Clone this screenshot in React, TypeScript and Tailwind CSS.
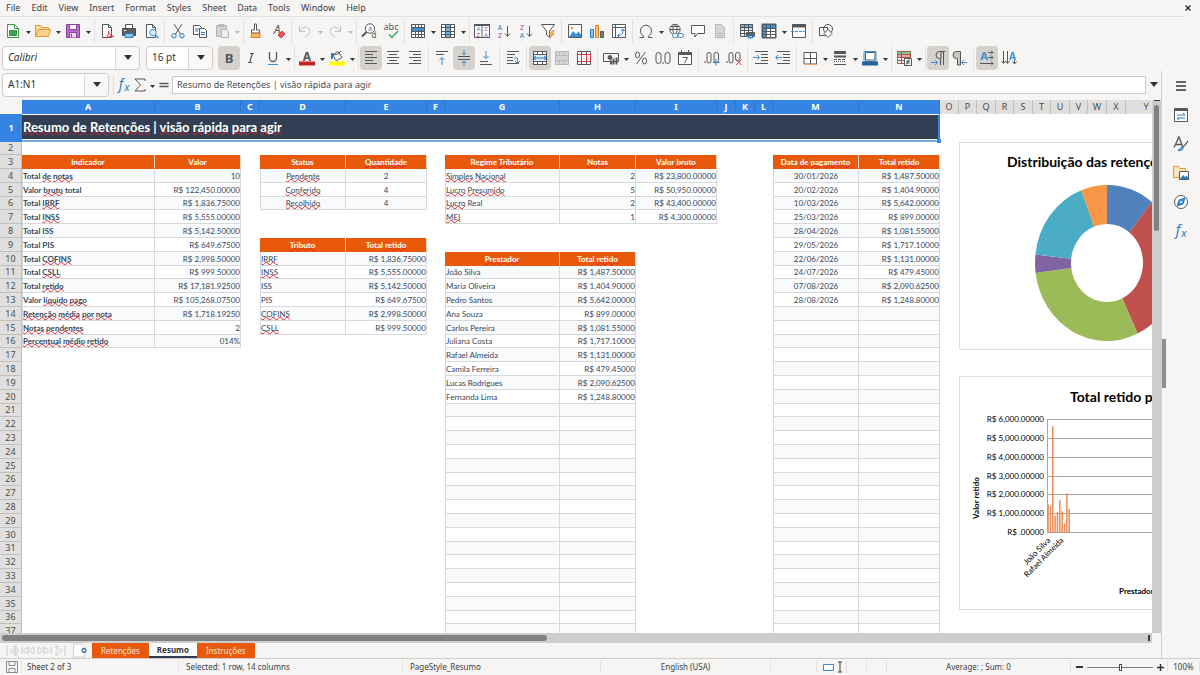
import React, { useState } from 'react';
import clsx from 'clsx';

type Align = 'left' | 'center' | 'right';

interface Block {
  col: number;
  row: number;
  headers: string[];
  aligns: Align[];
  rows: string[][];
  bold?: boolean;
  fillTo?: number;
}

const MENUS = ['File', 'Edit', 'View', 'Insert', 'Format', 'Styles', 'Sheet', 'Data', 'Tools', 'Window', 'Help'];
const COLS = 'ABCDEFGHIJKLMNOPQRSTUVWXY'.split('');
const COL_WIDTHS = [133, 86, 19, 86, 81, 18, 115, 76, 81, 19, 19, 18, 86, 81, 19, 18, 19, 18, 19, 18, 19, 18, 19, 19, 41];
const LAST_ROW = 37;
const SELECTED_COLS = 14;

// words between underscores are flagged by the spell checker
const TITLE = '_Resumo_ _de_ _Retenções_ | _visão_ _rápida_ _para_ _agir_';

const BLOCKS: Block[] = [
  {
    col: 0, row: 3, headers: ['_Indicador_', 'Valor'], aligns: ['left', 'right'], bold: true,
    rows: [
      ['Total _de_ _notas_', '10'],
      ['Valor _bruto_ total', 'R$ 122,450.00000'],
      ['Total _IRRF_', 'R$ 1,836.75000'],
      ['Total _INSS_', 'R$ 5,555.00000'],
      ['Total ISS', 'R$ 5,142.50000'],
      ['Total PIS', 'R$ 649.67500'],
      ['Total _COFINS_', 'R$ 2,998.50000'],
      ['Total _CSLL_', 'R$ 999.50000'],
      ['Total _retido_', 'R$ 17,181.92500'],
      ['Valor _líquido_ _pago_', 'R$ 105,268.07500'],
      ['_Retenção_ _média_ _por_ _nota_', 'R$ 1,718.19250'],
      ['_Notas_ _pendentes_', '2'],
      ['_Percentual_ _médio_ _retido_', '014%'],
    ],
  },
  {
    col: 3, row: 3, headers: ['Status', '_Quantidade_'], aligns: ['center', 'center'],
    rows: [['_Pendente_', '2'], ['_Conferido_', '4'], ['_Recolhido_', '4']],
  },
  {
    col: 3, row: 9, headers: ['_Tributo_', 'Total _retido_'], aligns: ['left', 'right'],
    rows: [
      ['_IRRF_', 'R$ 1,836.75000'],
      ['_INSS_', 'R$ 5,555.00000'],
      ['ISS', 'R$ 5,142.50000'],
      ['PIS', 'R$ 649.67500'],
      ['_COFINS_', 'R$ 2,998.50000'],
      ['_CSLL_', 'R$ 999.50000'],
    ],
  },
  {
    col: 6, row: 3, headers: ['Regime _Tributário_', '_Notas_', 'Valor _bruto_'], aligns: ['left', 'right', 'right'],
    rows: [
      ['_Simples_ _Nacional_', '2', 'R$ 23,800.00000'],
      ['_Lucro_ _Presumido_', '5', 'R$ 50,950.00000'],
      ['_Lucro_ Real', '2', 'R$ 43,400.00000'],
      ['_MEI_', '1', 'R$ 4,300.00000'],
    ],
  },
  {
    col: 6, row: 10, headers: ['_Prestador_', 'Total _retido_'], aligns: ['left', 'right'], fillTo: LAST_ROW,
    rows: [
      ['João Silva', 'R$ 1,487.50000'],
      ['Maria Oliveira', 'R$ 1,404.90000'],
      ['Pedro Santos', 'R$ 5,642.00000'],
      ['Ana Souza', 'R$ 899.00000'],
      ['Carlos Pereira', 'R$ 1,081.55000'],
      ['Juliana Costa', 'R$ 1,717.10000'],
      ['Rafael Almeida', 'R$ 1,131.00000'],
      ['Camila Ferreira', 'R$ 479.45000'],
      ['Lucas Rodrigues', 'R$ 2,090.62500'],
      ['Fernanda Lima', 'R$ 1,248.80000'],
    ],
  },
  {
    col: 12, row: 3, headers: ['Data _de_ _pagamento_', 'Total _retido_'], aligns: ['center', 'right'], fillTo: LAST_ROW,
    rows: [
      ['30/01/2026', 'R$ 1,487.50000'],
      ['20/02/2026', 'R$ 1,404.90000'],
      ['10/03/2026', 'R$ 5,642.00000'],
      ['25/03/2026', 'R$ 899.00000'],
      ['28/04/2026', 'R$ 1,081.55000'],
      ['29/05/2026', 'R$ 1,717.10000'],
      ['22/06/2026', 'R$ 1,131.00000'],
      ['24/07/2026', 'R$ 479.45000'],
      ['07/08/2026', 'R$ 2,090.62500'],
      ['28/08/2026', 'R$ 1,248.80000'],
    ],
  },
];

const ALIGN_CLASS: Record<Align, string> = {
  left: 'text-left',
  center: 'text-center',
  right: 'text-right',
};

const Spelled: React.FC<{ text: string }> = ({ text }) => (
  <>
    {text.split(/(_[^_]+_)/).map((part, i) =>
      part.startsWith('_') ? (
        <span key={i} className="underline decoration-wavy decoration-[#e0202a] decoration-1 underline-offset-[-1px] [text-decoration-skip-ink:none]">
          {part.slice(1, -1)}
        </span>
      ) : (
        <React.Fragment key={i}>{part}</React.Fragment>
      )
    )}
  </>
);

/* ---------- icons ---------- */

const Svg: React.FC<{ children: React.ReactNode }> = ({ children }) => (
  <svg width="16" height="16" viewBox="0 0 16 16" fill="none" stroke="#55585a" strokeWidth="1" aria-hidden="true" className="shrink-0 overflow-visible">
    {children}
  </svg>
);

const GlyphText: React.FC<{ x: number; y: number; size: number; fill?: string; bold?: boolean; italic?: boolean; anchor?: 'start' | 'middle'; children: string }> = ({
  x, y, size, fill = '#55585a', bold, italic, anchor = 'middle', children,
}) => (
  <text x={x} y={y} fontSize={size} fill={fill} stroke="none" textAnchor={anchor} fontFamily="'Noto Sans', sans-serif" fontWeight={bold ? 700 : 400} fontStyle={italic ? 'italic' : 'normal'}>
    {children}
  </text>
);

const pageShape = 'M3.5 1.5h6l3 3v10h-9z';

const ICONS: Record<string, React.ReactNode> = {
  new: <><path d="M2.5 1.5h7l4 4v9h-11z" stroke="#3a9a4c" fill="#fff" /><path d="M9.5 1.5v4h4" stroke="#3a9a4c" /><path d="M4.5 7.5h7v5h-7zM4.5 9h7M4.5 11h7M8 7v6" fill="#69c07a" stroke="#2f9043" /></>,
  open: <><path d="M.5 13.5v-11h5l1.500 2h6.500v9z" fill="#f9dc9a" stroke="#e8963a" /><path d="M.5 13.500l3-7h12l-2 7z" fill="#fbd48e" stroke="#e8963a" /></>,
  save: <><path d="M1.500 1.500h13v13h-13z" fill="#b66cc4" stroke="#8e3fa0" /><path d="M4.500 1.500h7v5h-7z" fill="#fff" stroke="#8e3fa0" /><path d="M4.500 14.500v-5h7v5" fill="#ecd7f0" stroke="#8e3fa0" /><path d="M6.500 11v3" stroke="#8e3fa0" /></>,
  pdf: <><path d={pageShape} fill="#fff" /><path d="M9.500 1.500v3h3" /><path d="M7 15c2-2 3-5 2.500-7 0 3 2 5 5.500 5.500-3-.5-6 .5-8 1.500z" stroke="#d9363e" /></>,
  print: <><path d="M4.500 5.500v-4h7v4" fill="#fff" /><path d="M1.500 5.500h13v7h-13z" fill="#5c6063" stroke="#4b4e50" /><path d="M3 7.500h2" stroke="#fff" /><path d="M4 10.500h8v4h-8z" fill="#8fc3ee" stroke="#2b7cc4" /></>,
  preview: <><path d={pageShape} fill="#fff" /><path d="M9.500 1.500v3h3" /><circle cx="10" cy="9.500" r="3.300" fill="#d7ebfa" stroke="#3c8fd1" /><path d="M12.300 12l3 3" stroke="#3c8fd1" strokeWidth="1.400" /></>,
  cut: <><path d="M4 1l6.500 10M12 1L5.500 11" /><circle cx="4" cy="12.700" r="2.200" stroke="#2b7cc4" /><circle cx="12" cy="12.700" r="2.200" stroke="#2b7cc4" /></>,
  copy: <><path d="M1.500 2.500h6l2 2v7h-8z" fill="#fff" /><path d="M3 6h5M3 8h3" stroke="#2b7cc4" /><path d="M7.500 5.500h5l2 2v7h-7z" fill="#fff" /><path d="M9 9.500h4M9 11.500h4" stroke="#2b7cc4" /></>,
  paste: <><path d="M2.500 2.500h10v11h-10z" fill="#d5d3d1" stroke="#b5b3b1" /><path d="M5 1.500h5v2h-5z" fill="#c4c2c0" stroke="#b5b3b1" /><path d="M7.500 6.500h5l2 2v6h-7z" fill="#f0efee" stroke="#b5b3b1" /></>,
  clone: <><path d="M6.500 1h2v6h3v3h-8v-3h3z" fill="#fff" /><path d="M3.500 10.500h8.500v4h-9z" fill="#f8b96a" stroke="#e07b1d" /></>,
  clear: <><GlyphText x={7} y={11} size={12} italic>A</GlyphText><path d="M8 12l4-4 3 3-4 4z" fill="#ec5a60" stroke="#d9363e" /></>,
  undo: <path d="M2.500 3v5.500h5.500M2.500 8.500c2-4 6.500-5.500 9-3.500s2 6-3.500 9" stroke="#c3c0bd" />,
  redo: <path d="M13.500 3v5.500h-5.500M13.500 8.500c-2-4-6.500-5.500-9-3.500s-2 6 3.500 9" stroke="#c3c0bd" />,
  find: <><circle cx="9" cy="5.500" r="4.700" fill="#fff" /><path d="M5.500 9L1 13.500" strokeWidth="2" /><GlyphText x={9} y={8} size={7} fill="#2b7cc4">a</GlyphText><GlyphText x={13} y={15} size={8}>d</GlyphText></>,
  spell: <><GlyphText x={8} y={7} size={9}>abc</GlyphText><path d="M6 11.500l3 3 6-6.500" stroke="#3fae5c" strokeWidth="1.500" /></>,
  row: <><path d="M1.500 1.500h13v13h-13z" fill="#fff" /><path d="M1 4.500h14v4h-14z" fill="#3c8fd1" stroke="none" /><path d="M1.500 1.500h13v13h-13zM1.500 4.500h13M1.500 8.500h13M1.500 11.500h13M5.500 1v3M5.500 9v6M8.500 1v3M8.500 9v6M11.500 1v3M11.500 9v6" /></>,
  column: <><path d="M1.500 1.500h13v13h-13z" fill="#fff" /><path d="M5 1h5v14h-5z" fill="#68b0e8" stroke="none" /><path d="M1.500 1.500h13v13h-13zM1.500 4.500h13M1.500 8.500h13M1.500 11.500h13M5.500 1v14M10.500 1v14" /></>,
  sort: <><path d="M.5 1.500h15v13h-15zM8 1.500v13" fill="#fff" /><path d="M0 2h16" strokeWidth="2" /><GlyphText x={4.300} y={8} size={6} fill="#2b7cc4">A</GlyphText><GlyphText x={4.300} y={14} size={6} fill="#a544b8">Z</GlyphText><GlyphText x={11.800} y={8} size={6} fill="#a544b8">Z</GlyphText><GlyphText x={11.800} y={14} size={6} fill="#2b7cc4">A</GlyphText></>,
  sortAsc: <><GlyphText x={4} y={6.500} size={7} fill="#2b7cc4">A</GlyphText><GlyphText x={4} y={15} size={7} fill="#a544b8">Z</GlyphText><path d="M11.500 3v10M9 10.500l2.500 3 2.500-3" /></>,
  sortDesc: <><GlyphText x={4} y={6.500} size={7} fill="#a544b8">Z</GlyphText><GlyphText x={4} y={15} size={7} fill="#2b7cc4">A</GlyphText><path d="M11.500 3v10M9 10.500l2.500 3 2.500-3" /></>,
  filter: <><path d="M1.500 1.500h13l-5 6.500v6l-3-2v-4z" fill="#fff" /><path d="M12.500 7.500l-3.500 4h2.500l-2 4 5-5h-2.500l2-3z" fill="#f8b96a" stroke="#e8862a" strokeWidth=".7" /></>,
  image: <><path d="M1.500 1.500h13v13h-13z" fill="#fff" /><path d="M2 14l4-6 3 3 2.500-2.500 2.500 3v2.500z" fill="#3c8fd1" stroke="none" /><circle cx="5" cy="5" r="1.400" fill="#f5a742" stroke="none" /></>,
  chart: <><path d="M1.500 6.500h3v8h-3z" fill="#8fc3ee" stroke="#2b7cc4" /><path d="M6.500 2.500h3v12h-3z" fill="#f8c078" stroke="#e07b1d" /><path d="M11.500 8.500h3v6h-3z" fill="#7c7f81" /></>,
  pivot: <><path d="M1.500 1.500h13v13h-13zM1.500 4.500h13M4.500 1.500v13" fill="#fff" /><path d="M7 12.500c4 0 5-2 5-6M10 8l2-2 2 2M8.500 10.500l-2 2 2 2" stroke="#2b7cc4" /></>,
  omega: <path d="M1.500 14.500h4v-1.500c-2-1-3-3-3-5a5.500 5.800 0 0 1 11 0c0 2-1 4-3 5v1.500h4" />,
  link: <><circle cx="7" cy="6.500" r="5.200" /><path d="M2 6.500h10M7 1.500c-3 3-3 7 0 10M7 1.500c3 3 3 7 0 10M3 3.500h8" /><rect x="4.500" y="10.500" width="6" height="4" rx="2" fill="#f6f5f4" stroke="#3c8fd1" /><rect x="9.500" y="10.500" width="6" height="4" rx="2" stroke="#3c8fd1" /></>,
  comment: <path d="M1.500 2.500h13v8h-7l-2.500 3.500v-3.500h-3.500z" fill="#fff" />,
  header: <><path d={pageShape} fill="#d8d6d4" stroke="#bbb8b5" /><path d="M5.500 10.500h5M5.500 12.500h5" stroke="#bbb8b5" /></>,
  printRange: <><path d="M1 1.500h13v4h-13z" fill="#68b0e8" stroke="none" /><path d="M1.500 1.500h12v12h-12zM1.500 4.500h12M1.500 7.500h12M1.500 10.500h12M5.500 1v13M9.500 1v13" /><path d="M7.500 9.500h8v4h-8z" fill="#5c6063" /><path d="M9.500 12.500h4v2.500h-4z" fill="#8fc3ee" stroke="#2b7cc4" /></>,
  freeze: <><path d="M1 1h14v14h-14z" fill="#fff" /><path d="M1 1h4v14h-4zM1 1h14v4h-14z" fill="#3c8fd1" stroke="none" /><path d="M1.500 1.500h13v13h-13zM1.500 5.500h13M1.500 8.500h13M1.500 11.500h13M5.500 1v14M9.500 1v14" /></>,
  split: <><path d="M1.500 1.500h13v13h-13z" fill="#fff" /><path d="M1 3h14" strokeWidth="3" /><path d="M0 8.500h16" stroke="#3c8fd1" strokeDasharray="3 1" /></>,
  shapes: <><path d="M1.500 4.500h8v8h-8z" /><circle cx="10" cy="6" r="4.500" /><path d="M10 6.500l4 4-4 4-4-4z" fill="#fff" /></>,
  bold: <GlyphText x={8} y={12.500} size={13} bold>B</GlyphText>,
  italic: <path d="M7 3.500h4M5 12.500h4M9.300 3.500l-2.600 9" strokeWidth="1.200" />,
  underline: <><path d="M4.500 2v6a3.500 3.500 0 0 0 7 0v-6" strokeWidth="1.300" /><path d="M3 14.500h10" stroke="#3c8fd1" /></>,
  fontColor: <><GlyphText x={8} y={10.500} size={12} bold>A</GlyphText><path d="M0 13.500h16" stroke="#c9211e" strokeWidth="4" /></>,
  fill: <><path d="M3 3v6" stroke="#2b7cc4" strokeWidth="2" /><path d="M6 9.500l-2-5 5-3 4 6-5 3z" fill="#fff" /><path d="M4 5l5-1 3-3" /><path d="M0 13.500h16" stroke="#ffff00" strokeWidth="4" /></>,
  left: <path d="M2 1.500h12M2 4.500h8M2 7.500h12M2 10.500h8M2 13.500h12" />,
  center: <path d="M2 1.500h12M4 4.500h8M2 7.500h12M4 10.500h8M2 13.500h12" />,
  right: <path d="M2 1.500h12M6 4.500h8M2 7.500h12M6 10.500h8M2 13.500h12" />,
  top: <><path d="M2 1.500h12M2 4.500h8" /><path d="M8 15v-7.500M5.500 10l2.500-2.500 2.500 2.500" stroke="#3c8fd1" /></>,
  middle: <><path d="M2 6.500h12M2 9.500h12" /><path d="M8 0v5M6 3l2 2 2-2M8 16v-5M6 13l2-2 2 2" stroke="#3c8fd1" /></>,
  bottom: <><path d="M2 14.500h12M2 11.500h8" /><path d="M8 1v7.500M5.500 6l2.500 2.500 2.500-2.500" stroke="#3c8fd1" /></>,
  wrap: <><path d="M2 1.500h12M2 4.500h8M2 7.500h6M2 10.500h6M2 13.500h12" /><path d="M9 8h3.500v5M10 11l2.500 2.500 2.500-2.500" stroke="#3c8fd1" /></>,
  merge: <><path d="M1.500 1.500h13v13h-13z" fill="#fff" /><path d="M1 5h14v6h-14z" fill="#d7ebfa" stroke="none" /><path d="M1.500 1.500h13v13h-13zM1.500 4.500h13M1.500 11.500h13M5.500 1v3.500M10.500 1v3.500M5.500 11.500v3M10.500 11.500v3" /><path d="M2 8h12M4 6l-2 2 2 2M12 6l2 2-2 2" stroke="#2b7cc4" /></>,
  mergeCells: <><path d="M1.500 1.500h13v13h-13z" fill="#d8d6d4" stroke="#bbb8b5" /><path d="M1.500 5.500h13M1.500 10.500h13M5.500 1v4M10.500 1v4M5.500 11v4M10.500 11v4" stroke="#bbb8b5" /></>,
  unmerge: <><path d="M1.500 1.500h13v13h-13zM5.500 1v3M10.500 1v3M5.500 12v3M10.500 12v3" fill="#fff" /><path d="M1.500 4.500h13v7h-13zM5.500 4.500v7M10.500 4.500v7" stroke="#d9363e" /></>,
  currency: <><path d="M.5 3.500h15v8h-15z" /><circle cx="7" cy="7.500" r="2" fill="#55585a" /><path d="M8 14.500v-4M10.500 14.500v-6M13.500 14.500v-7" strokeWidth="2" /></>,
  percent: <><ellipse cx="4.500" cy="5" rx="2" ry="3" /><ellipse cx="11.500" cy="11" rx="2" ry="3" /><path d="M12.500 2l-9 12" /></>,
  number: <><rect x="1" y="2.500" width="5" height="11" rx="2.500" /><rect x="10" y="2.500" width="5" height="11" rx="2.500" /><path d="M8 12v2" /></>,
  date: <><path d="M1.500 2.500h13v12h-13z" fill="#fff" /><path d="M1 4h14" strokeWidth="2" /><path d="M4.500 0v3M11.500 0v3M5.500 7.500h5l-3 5.500" /></>,
  addDecimal: <><path d="M1 11v2" /><rect x="3" y="2.500" width="4" height="10.500" rx="2" /><rect x="10" y="2.500" width="4.500" height="10" rx="2" /><path d="M12 9v6.500M9 12.500h6.500" stroke="#2b7cc4" /></>,
  delDecimal: <><path d="M1 11v2" /><rect x="3" y="2.500" width="4" height="10.500" rx="2" /><rect x="9.500" y="2.500" width="4.500" height="8" rx="2" /><path d="M10 9.500l5.500 5.500M15.500 9.500l-5.500 5.500" stroke="#d9363e" /></>,
  indent: <><path d="M2 1.500h13M8 4.500h7M8 7.500h7M8 10.500h7M2 13.500h13" /><path d="M0 7.500h6M4 5l2.500 2.500-2.500 2.500" stroke="#3c8fd1" /></>,
  outdent: <><path d="M2 1.500h13M8 4.500h7M8 7.500h7M8 10.500h7M2 13.500h13" /><path d="M7 7.500h-6M3 5l-2.500 2.500 2.500 2.500" stroke="#3c8fd1" /></>,
  borders: <><path d="M2 2.500h12.500v11.500h-12.500zM8.500 2.500v11.500M2 8.500h12.500" fill="#fff" /><path d="M2 14.500h13" stroke="#f0a869" /></>,
  lineStyle: <><path d="M2 2.500h12" strokeWidth="3" /><path d="M2 6.500h12" strokeWidth="2" /><path d="M2 9.500h12" strokeDasharray="3 1" /><path d="M2 11.500h12" strokeDasharray="1 1" /><path d="M2 14.500h12" /></>,
  borderColor: <><path d="M3.500 2.500h9.500v7.500h-9.500z" fill="#fff" /><path d="M2 1.500h12v10h-12z" stroke="#3c8fd1" /><path d="M0 13.500h16" stroke="#2a6099" strokeWidth="4" /></>,
  conditional: <><path d="M1 1h14v4h-14z" fill="#7fcf93" stroke="none" /><path d="M1 5h14v3h-14z" fill="#f0a0a0" stroke="none" /><path d="M1.500 1.500h13v12h-13zM1.500 4.500h13M1.500 7.500h13M1.500 10.500h13M5.500 1v12" stroke="#a05a50" /><path d="M8.500 8.500h7v7h-7z" fill="#fff" /><path d="M10 11h4M10 13h4M13 9.500l-2.500 5" /></>,
  ltr: <><path d="M15 1.500h-5.500a3.500 3.500 0 0 0 0 7h1.500v-7M10.500 8v7M13.500 1.500v13.500" /><path d="M1 12.500h6M5 10l2.500 2.500-2.500 2.500" stroke="#3c8fd1" /></>,
  rtl: <><path d="M5.500 8.500h-1a3.500 3.500 0 0 1 0-7h4v13.500h-3z" fill="#c9c7c5" /><path d="M15 12.500h-5M12 10l-2.500 2.500 2.500 2.500" stroke="#3c8fd1" /></>,
  textLtr: <><GlyphText x={5} y={9.500} size={11} bold fill="#3c8fd1">A</GlyphText><path d="M9 2.500h5M9 7.500h5M1 13.500h13M12 .5l2 2-2 2M12 5.500l2 2-2 2M12 11.500l2 2-2 2" /></>,
  textTtb: <><path d="M2.500 1v12M6.500 1v12M.5 11l2 2.500 2-2.500M4.500 11l2 2.500 2-2.500M13.500 10v4M11.500 11.500l2 2.500 2-2.500" /><GlyphText x={11.500} y={9.500} size={10} bold fill="#3c8fd1">A</GlyphText></>,
  fx: <><GlyphText x={5} y={12} size={14} italic fill="#2b7cc4">f</GlyphText><GlyphText x={11} y={14} size={11} italic fill="#2b7cc4">x</GlyphText></>,
  sigma: <path d="M13 4v-2h-10l5.500 6-5.500 6h10v-2" />,
  equals: <path d="M3.500 6.500h9M3.500 9.500h9" strokeWidth="1.500" />,
  properties: <><path d="M1.500 1.500h13v13h-13z" fill="#fff" /><path d="M1 3h14" strokeWidth="2" /><path d="M4 8h8M10 6l2 2M4 11h8M6 13l-2-2" stroke="#2b7cc4" /></>,
  styles: <><path d="M1 11.500l5-10.500 4 10.500M2.500 8.500h6" strokeWidth="1.300" /><path d="M15 5l-6 7M14 4.500c2 1-2 5-4 7" /><path d="M5 14.500c3 .5 5-.5 5-3-2-.5-3 1-5 3z" fill="#68b0e8" stroke="#2b7cc4" /></>,
  gallery: <><path d="M.5 12.500v-11h5l1 2h6v9z" fill="#fbe3bd" stroke="#e8963a" /><path d="M6.500 6.500h9v8h-9z" fill="#fff" /><path d="M7 14l3-4 2 2 1.500-1.500 1.500 2v1.500z" fill="#2b7cc4" stroke="none" /></>,
  navigator: <><circle cx="8" cy="8" r="6.500" fill="#fff" /><path d="M12 4l-2 6-6 2 2-6z" fill="#3c8fd1" stroke="#2b7cc4" /><circle cx="8" cy="8" r="1" fill="#fff" stroke="none" /></>,
  disk: <path d="M2.500 2.500h11v11h-11zM5 2.500v4h6v-4M5 13.500v-4h6v4" stroke="#8b8e8f" />,
};

const IconButton: React.FC<{ icon: string; active?: boolean }> = ({ icon, active }) => (
  <button
    type="button"
    aria-label={icon}
    className={clsx('flex h-6 w-[22px] shrink-0 items-center justify-center rounded-sm', active && 'bg-[#d5d1cd]')}
  >
    <Svg>{ICONS[icon]}</Svg>
  </button>
);

const Triangle: React.FC<{ large?: boolean; faded?: boolean }> = ({ large, faded }) => (
  <svg width={large ? 8 : 5} height={large ? 5 : 3} viewBox="0 0 8 5" preserveAspectRatio="none" fill={faded ? '#bcb9b6' : '#2e3436'} aria-hidden="true">
    <path d="M0 0h8l-4 5z" />
  </svg>
);

// "name" is a plain button, "name+" is active, "name>" has a menu arrow, "|" and "!" are wide and narrow separators
const ToolRow: React.FC<{ items: string }> = ({ items }) => (
  <div className="flex items-center">
    {items.split(' ').map((item, i) => {
      if (item === '|' || item === '!') {
        return (
          <span key={i} className={clsx('flex h-6 shrink-0 justify-center', item === '|' ? 'w-[5px]' : 'w-1')}>
            <span className="w-px bg-[#e3e1df]" />
          </span>
        );
      }
      const name = item.replace(/[+>]/g, '');
      return (
        <React.Fragment key={i}>
          <IconButton icon={name} active={item.endsWith('+')} />
          {item.endsWith('>') && (
            <button type="button" aria-label={`${name} menu`} className="flex h-6 w-2 shrink-0 items-center justify-center pt-1">
              <Triangle faded={['undo', 'redo', 'paste'].includes(name)} />
            </button>
          )}
        </React.Fragment>
      );
    })}
  </div>
);

const ComboBox: React.FC<{ label: string; initial: string; className: string; italic?: boolean }> = ({ label, initial, className, italic }) => {
  const [value, setValue] = useState(initial);
  return (
    <div className={clsx('flex h-6 shrink-0 rounded-sm border border-[#cfcbc7] bg-white', className)}>
      <input
        aria-label={label}
        value={value}
        onChange={e => setValue(e.target.value)}
        className={clsx('min-w-0 flex-1 pl-[5px] text-[10px] text-[#2e3436] outline-none', italic && 'italic')}
      />
      <button type="button" aria-label={`${label} list`} className="flex w-6 items-center justify-center rounded-r-sm border-l border-[#dcd9d6] bg-[#f9f8f7]">
        <Triangle large />
      </button>
    </div>
  );
};

const FormulaBar = () => {
  const [formula, setFormula] = useState('Resumo de Retenções | visão rápida para agir');
  return (
    <div className="flex h-[27px] shrink-0 items-center pl-0.5">
      <ComboBox label="Name box" initial="A1:N1" className="w-[107px]" />
      <span className="mr-0.5 ml-1 h-5 w-px bg-[#dcd9d6]" />
      <div className="flex items-center">
        {['fx', 'sigma', 'equals'].map(icon => (
          <React.Fragment key={icon}>
            <button type="button" aria-label={icon} className="flex h-6 w-4 items-center justify-center">
              <Svg>{ICONS[icon]}</Svg>
            </button>
            {icon === 'sigma' && (
              <button type="button" aria-label="sigma menu" className="flex h-6 w-2 items-center justify-center pt-1"><Triangle /></button>
            )}
          </React.Fragment>
        ))}
      </div>
      <input
        aria-label="Formula"
        value={formula}
        onChange={e => setFormula(e.target.value)}
        className="h-[18px] min-w-0 flex-1 border border-[#cfcbc7] bg-white pl-1 text-[9px] text-[#4a4d4f] outline-none"
      />
      <button type="button" aria-label="Expand formula bar" className="flex h-6 w-[15px] items-center justify-center"><Triangle large /></button>
    </div>
  );
};

/* ---------- sheet ---------- */

const findBlock = (row: number, col: number) =>
  BLOCKS.find(b => {
    const last = b.fillTo ?? b.row + b.rows.length;
    return row >= b.row && row <= last && col >= b.col && col < b.col + b.headers.length;
  });

const Cell: React.FC<{ row: number; col: number }> = ({ row, col }) => {
  const block = findBlock(row, col);
  if (!block) return <td className="p-0" />;
  const c = col - block.col;
  if (row === block.row) {
    return (
      <th scope="col" className="overflow-hidden border-r border-b border-r-[#f6d9c9] border-b-[#e8590c] bg-[#e8590c] p-0 text-center font-bold text-white">
        <span className="block h-3 overflow-hidden"><Spelled text={block.headers[c]} /></span>
      </th>
    );
  }
  const offset = row - block.row;
  return (
    <td
      className={clsx(
        'border-r border-b border-[#d6d9db] p-0 text-[#37475a]',
        ALIGN_CLASS[block.aligns[c]],
        c === 0 && 'border-l',
        c === 0 && block.bold && 'font-bold',
        offset % 2 === 1 && 'bg-[#f8fafc]'
      )}
    >
      <Spelled text={block.rows[offset - 1]?.[c] ?? ''} />
    </td>
  );
};

const SheetTable = () => (
  <table className="w-[1167px] table-fixed border-separate border-spacing-0 font-[Lato,sans-serif] text-[8px] leading-3 whitespace-nowrap">
    <colgroup>
      <col style={{ width: 22 }} />
      {COL_WIDTHS.map((width, i) => <col key={i} style={{ width }} />)}
    </colgroup>
    <thead>
      <tr className="h-3.5 font-['Noto_Sans',sans-serif] text-[9px]">
        <td className="bg-[#f6f5f4] p-0" />
        {COLS.map((name, i) => (
          <th
            key={name}
            scope="col"
            className={clsx(
              'border-r p-0 text-center',
              i < SELECTED_COLS ? 'border-[#2d75cf] bg-[#3584e4] font-bold text-white' : 'border-[#c2c0be] bg-[#e1dfdd] font-normal text-[#4a4d4f]'
            )}
          >
            {name}
          </th>
        ))}
      </tr>
    </thead>
    <tbody>
      <tr className="h-7">
        <th scope="row" className="bg-[#3584e4] p-0 text-center font-['Noto_Sans',sans-serif] text-[9px] font-bold text-white">1</th>
        <td colSpan={SELECTED_COLS} className="relative border-t border-r-2 border-b-2 border-t-white border-r-[#3584e4] border-b-[#76a9e6] bg-[#323f52] p-0 text-left text-[13px] leading-5 font-bold text-white">
          <div className="flex h-[25px] items-center border-b border-white pl-px">
            <span><Spelled text={TITLE} /></span>
          </div>
          <span className="absolute -right-[3px] -bottom-[3px] size-1 bg-[#3584e4]" />
        </td>
        <td colSpan={COLS.length - SELECTED_COLS} className="p-0" />
      </tr>
      {Array.from({ length: LAST_ROW - 1 }, (_, i) => i + 2).map(row => (
        <tr key={row} className={row === 2 || row % 5 === 1 ? 'h-[13px]' : 'h-3.5'}>
          <th scope="row" className="border-r border-b border-[#c2c0be] bg-[#e1dfdd] p-0 text-center font-['Noto_Sans',sans-serif] text-[9px] font-normal text-[#4a4d4f]">
            {row}
          </th>
          {COLS.map((name, col) => <Cell key={name} row={row} col={col} />)}
        </tr>
      ))}
    </tbody>
  </table>
);

const SLICES = [
  { value: 1836.75, color: '#4f81bd' },
  { value: 5555, color: '#c0504d' },
  { value: 5142.5, color: '#9bbb59' },
  { value: 649.675, color: '#8064a2' },
  { value: 2998.5, color: '#4bacc6' },
  { value: 999.5, color: '#f79646' },
];

const slicePath = (from: number, to: number) => {
  const point = (t: number, rx: number, ry: number) =>
    `${(147 + rx * Math.sin(t * 2 * Math.PI)).toFixed(2)} ${(120 - ry * Math.cos(t * 2 * Math.PI)).toFixed(2)}`;
  return `M${point(from, 72, 78)}A72 78 0 0 1 ${point(to, 72, 78)}L${point(to, 36, 39)}A36 39 0 0 0 ${point(from, 36, 39)}Z`;
};

const DonutChart = () => {
  const total = SLICES.reduce((sum, s) => sum + s.value, 0);
  let start = 0;
  return (
    <svg width="400" height="208" className="border border-[#dcdfe1] bg-white font-[Lato,sans-serif]" role="img" aria-label="Distribuição das retenções">
      <text x="47" y="24" fontSize="14" fontWeight="700">Distribuição das retenções por tributo</text>
      {SLICES.map(({ value, color }) => {
        const from = start;
        start += value / total;
        return <path key={color} d={slicePath(from, start)} fill={color} />;
      })}
    </svg>
  );
};

const BARS = [1487.5, 1404.9, 5642, 899, 1081.55, 1717.1, 1131, 479.45, 2090.625, 1248.8];

const BarChart = () => (
  <svg width="400" height="234" className="border border-[#dcdfe1] bg-white font-[Lato,sans-serif]" role="img" aria-label="Total retido por prestador">
    <text x="110" y="25" fontSize="14" fontWeight="700">Total retido por prestador</text>
    {[6, 5, 4, 3, 2, 1, 0].map(n => {
      const y = 156 - n * 18.8;
      return (
        <g key={n}>
          <path d={`M87 ${Math.round(y) - 0.5}H400`} stroke="#a6a6a6" />
          <text x="84" y={y + 2} fontSize="8" textAnchor="end">{n ? `R$ ${n},000.00000` : 'R$ .00000'}</text>
        </g>
      );
    })}
    <path d="M87.500 43v113" stroke="#a6a6a6" />
    {BARS.map((value, i) => {
      const height = (value / 6000) * 113;
      return <rect key={i} x={87.3 + i * 2.35} y={155.5 - height} width="1.500" height={height} fill="#e98a57" />;
    })}
    <text transform="translate(91 164) rotate(-45)" fontSize="8" textAnchor="end">João Silva</text>
    <text transform="translate(104 164) rotate(-45)" fontSize="8" textAnchor="end">Rafael Almeida</text>
    <text transform="translate(19 121) rotate(-90)" fontSize="8" fontWeight="700" textAnchor="middle">Valor retido</text>
    <text x="159" y="217" fontSize="8" fontWeight="700">Prestador</text>
  </svg>
);

const SheetArea = () => (
  <div className="flex min-h-0 flex-1">
    <div className="flex min-w-0 flex-1 flex-col">
      <div className="relative min-h-0 flex-1 overflow-hidden bg-white">
        <SheetTable />
        {/* charts float over the cells */}
        <div className="absolute top-[42px] left-[959px]"><DonutChart /></div>
        <div className="absolute top-[276px] left-[959px]"><BarChart /></div>
      </div>
      <div className="flex h-2.5 shrink-0 items-center justify-between bg-[#cdcdcd] px-0.5">
        <div className="h-1.5 w-19/40 rounded-full bg-[#7f8180]" />
        <div className="h-1.5 w-0.5 bg-[#3c3e3f]" />
      </div>
    </div>
    <div className="mb-2.5 flex w-[9px] shrink-0 flex-col items-center bg-[#cdcdcd]">
      <div className="mb-1 h-px w-1.5 bg-[#3c3e3f]" />
      <div className="h-[126px] w-[5px] rounded-full bg-[#7f8180]" />
    </div>
  </div>
);

const TABS = ['Retenções', 'Resumo', 'Instruções'];

const SheetTabs = () => {
  const [active, setActive] = useState('Resumo');
  return (
    <div className="flex h-[15px] shrink-0 items-stretch pl-1.5">
      <svg width="62" height="15" viewBox="0 0 62 15" fill="none" stroke="#d0cecb" aria-hidden="true">
        <path d="M1 2v11M10 2L4 7.500l6 5.500v-3L7 7.500l3-2.500zM12 6v3h-3v-3zM16 4v7M22 4l-5 3.500 5 3.500zM28 4l-5 3.500 5 3.500zM32 4v7l5-3.500zM38 4v7l5-3.500zM45 4v7M50 2l6 5.500-6 5.500v-3l3-2.500-3-2.500zM59 2v11" />
      </svg>
      <button type="button" aria-label="Add sheet" className="flex w-6 items-center justify-center">
        <svg width="14" height="15" viewBox="0 0 14 15" fill="#fff" stroke="#d0cecb" aria-hidden="true">
          <path d="M.500 1h8l3 3v10h-11z" />
          <circle cx="11" cy="7.500" r="2.500" fill="#2a6099" stroke="none" />
          <path d="M11 6v3M9.500 7.500h3" stroke="#fff" />
        </svg>
      </button>
      {TABS.map(tab => (
        <button
          key={tab}
          type="button"
          onClick={() => setActive(tab)}
          className={clsx(
            'text-[8px] leading-3',
            tab === active ? 'border-b-2 border-[#2f3b4e] bg-white px-2 font-bold text-[#2e3436]' : 'bg-[#e8590c] px-[9px] text-[#fbe3d6]'
          )}
        >
          {tab}
        </button>
      ))}
    </div>
  );
};

const Sidebar = () => (
  <aside className="flex w-[39px] shrink-0 border-l border-[#cfcdcb]">
    <div className="w-1 pt-[268px]">
      <div className="h-[49px] bg-[#8e908f]" />
    </div>
    <div className="flex flex-1 flex-col items-center pr-1">
      {['menu', 'properties', 'styles', 'gallery', 'navigator', 'fx'].map(icon => (
        <button key={icon} type="button" aria-label={icon} className="flex h-[29px] w-[22px] items-center justify-center">
          {icon === 'menu' ? (
            <svg width="10" height="10" viewBox="0 0 10 10" stroke="#2e3436" strokeWidth="1.500" aria-hidden="true"><path d="M0 1h10M0 5h10M0 9h10" /></svg>
          ) : (
            <Svg>{ICONS[icon]}</Svg>
          )}
        </button>
      ))}
    </div>
  </aside>
);

const StatusBar = () => {
  const [zoom, setZoom] = useState(50);
  return (
    <footer className="grid h-[17px] shrink-0 grid-cols-[22px_157fr_224fr_198fr_170fr_46fr_30px_20px_20px_184fr_97px_32px] items-center border-t border-[#cfcdcb] text-[8px] leading-3 [&>*]:flex [&>*]:h-3 [&>*]:items-center [&>*]:border-r [&>*]:border-[#e3e1df]">
      <span className="justify-center pl-0.5">
        <Svg>{ICONS.disk}</Svg>
      </span>
      <span className="pl-[5px]">Sheet 2 of 3</span>
      <span className="pl-[7px]">Selected: 1 row, 14 columns</span>
      <span className="pl-[7px]">PageStyle_Resumo</span>
      <span className="justify-center">English (USA)</span>
      <span />
      <span className="gap-1 pl-1.5">
        <svg width="20" height="12" viewBox="0 0 20 12" fill="none" aria-hidden="true">
          <path d="M.500 3.500h10v6h-10z" stroke="#3c8fd1" fill="#fff" />
          <path d="M15 1h4M17 1v10M15 11h4" stroke="#3c3e3f" />
        </svg>
      </span>
      <span />
      <span />
      <span className="justify-center">Average: ; Sum: 0</span>
      <span className="gap-[3px] pl-[5px]">
        <button type="button" aria-label="Zoom out" className="flex size-2 items-center"><span className="h-0.5 w-[7px] bg-[#2e3436]" /></button>
        <input
          type="range"
          aria-label="Zoom"
          value={zoom}
          onChange={e => setZoom(Number(e.target.value))}
          className="h-3 w-[66px] appearance-none bg-transparent [&::-webkit-slider-runnable-track]:h-px [&::-webkit-slider-runnable-track]:bg-[#7f8180] [&::-webkit-slider-thumb]:-mt-[3px] [&::-webkit-slider-thumb]:h-[7px] [&::-webkit-slider-thumb]:w-[3px] [&::-webkit-slider-thumb]:appearance-none [&::-webkit-slider-thumb]:border [&::-webkit-slider-thumb]:border-[#4a4d4f] [&::-webkit-slider-thumb]:bg-white"
        />
        <button type="button" aria-label="Zoom in" className="flex size-2 items-center justify-center">
          <svg width="7" height="7" viewBox="0 0 7 7" stroke="#2e3436" strokeWidth="1.500" aria-hidden="true"><path d="M0 3.500h7M3.500 0v7" /></svg>
        </button>
      </span>
      <span className="justify-center border-r-0">100%</span>
    </footer>
  );
};

const App: React.FC = () => (
  <div className="flex h-screen flex-col overflow-hidden bg-[#f6f5f4] font-['Noto_Sans',sans-serif] text-[#3c3e3f]">
    <nav className="mr-4 flex h-[17px] shrink-0 items-center gap-px border-b border-[#e3e1df] pl-px text-[9px]">
      {MENUS.map(menu => <button key={menu} type="button" className="px-[5px]">{menu}</button>)}
    </nav>
    <button type="button" aria-label="Close document" className="absolute top-1 right-2 flex size-2 items-center justify-center">
      <svg width="6" height="6" viewBox="0 0 6 6" stroke="#2e3436" strokeWidth="1.500" aria-hidden="true"><path d="M.500.500l5 5M5.500.500l-5 5" /></svg>
    </button>
    <div className="flex h-[27px] shrink-0 items-center pl-0.5">
      <ToolRow items="new> open> save> ! pdf print preview | cut copy paste> ! clone clear | undo> redo> ! find spell | row> column> ! sort sortAsc sortDesc filter | image chart pivot | omega> link comment header | printRange freeze> split | shapes" />
    </div>
    <div className="flex h-[27px] shrink-0 items-center pl-0.5">
      <ComboBox label="Font name" initial="Calibri" className="w-[138px]" italic />
      <ComboBox label="Font size" initial="16 pt" className="mr-[5px] ml-1.5 w-[67px]" />
      <ToolRow items="bold+ italic underline> ! fontColor> fill> ! left+ center right | top middle+ bottom | wrap | merge+ mergeCells unmerge | currency> percent number date | addDecimal delDecimal | indent outdent | borders> lineStyle> borderColor> ! conditional> ! ltr+ rtl | textLtr+ textTtb" />
    </div>
    <div className="flex min-h-0 flex-1">
      <main className="flex min-w-0 flex-1 flex-col">
        <FormulaBar />
        <div className="h-0.5 shrink-0" />
        <SheetArea />
        <SheetTabs />
      </main>
      <Sidebar />
    </div>
    <StatusBar />
  </div>
);

export default App;
